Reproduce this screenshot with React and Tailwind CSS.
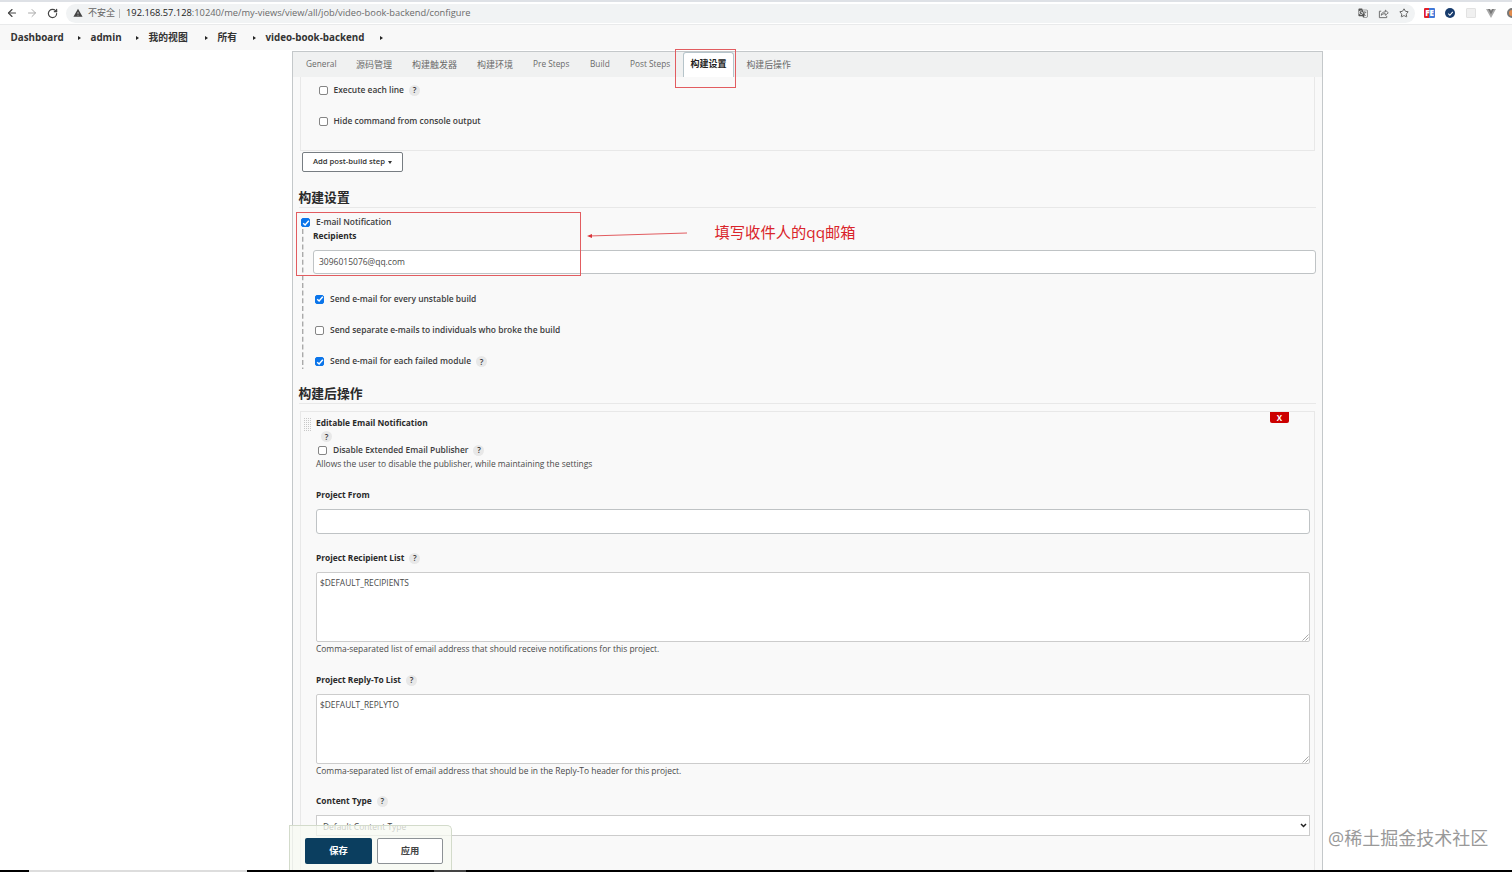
import React from "react";
import { ArrowLeft, ArrowRight, RotateCw, Star } from "lucide-react";
import { MdGTranslate, MdWarning } from "react-icons/md";

const crumbs = [
  { label: "Dashboard", className: "w-[70px]" },
  { label: "admin", className: "w-[48px]" },
  { label: "我的视图", className: "w-[59px]" },
  { label: "所有", className: "w-[38px]" },
  { label: "video-book-backend", className: "w-[117px]" },
];

const tabs = [
  { label: "General", className: "w-[50px] text-[8.3px]" },
  { label: "源码管理", className: "w-[56px] text-[9px]" },
  { label: "构建触发器", className: "w-[65px] text-[9px]" },
  { label: "构建环境", className: "w-[56px] text-[9px]" },
  { label: "Pre Steps", className: "w-[57px] text-[8.3px]" },
  { label: "Build", className: "w-[40px] text-[8.3px]" },
  { label: "Post Steps", className: "w-[53px] text-[8.3px]" },
];

function Checkbox({ checked }) {
  return (
    <span
      className={`flex size-[9px] shrink-0 items-center justify-center rounded-[2px] border ${
        checked ? "border-[#0b75ea] bg-[#0b75ea]" : "border-[#858585] bg-white"
      }`}
    >
      {checked && (
        <svg viewBox="0 0 8 8" className="size-[8px] shrink-0" fill="none" stroke="white" strokeWidth="1.4">
          <path d="M1.2 4.2 3.1 6 6.8 1.8" />
        </svg>
      )}
    </span>
  );
}

function Help({ className = "" }) {
  return (
    <span
      className={`flex size-[11px] shrink-0 items-center justify-center rounded-full bg-[#e8e8e8] text-[8px] font-semibold text-[#333] ${className}`}
    >
      ?
    </span>
  );
}

function CheckRow({ label, checked, help, className = "" }) {
  return (
    <div className={`flex items-center text-[8.43px] font-semibold text-[#3c3c3c] ${className}`}>
      <Checkbox checked={checked} />
      <span className="ml-1.5">{label}</span>
      {help && <Help className="ml-[5px]" />}
    </div>
  );
}

function Label({ children, help, className = "" }) {
  return (
    <div className={`flex items-center text-[8.4px] font-bold text-[#2a2a2a] ${className}`}>
      <span>{children}</span>
      {help && <Help className="ml-[5px]" />}
    </div>
  );
}

function Heading({ children, className = "" }) {
  return (
    <h2
      className={`ml-[5.5px] mr-[6px] flex h-5 items-center border-b border-[#e8e8e8] text-[12.8px] font-bold text-[#2a2a2a] ${className}`}
    >
      {children}
    </h2>
  );
}

function TextArea({ value }) {
  return (
    <div className="relative mr-[4px] h-[70px] rounded-[2px] border border-[#ccc] bg-white px-[3px] pt-[4px] text-[8.4px] leading-[12px] text-[#4a4a4a]">
      {value}
      <svg viewBox="0 0 7 7" className="absolute bottom-0 right-0 size-[7px]" stroke="#888" strokeWidth="0.7">
        <path d="M0.5 6.5 6.5 0.5M3.5 6.5 6.5 3.5" />
      </svg>
    </div>
  );
}

function BrowserBar() {
  return (
    <div className="flex h-[25px] items-center border-b border-t-2 border-b-[#e9eaeb] border-t-[#dee1e6] bg-white text-[#444]">
      <ArrowLeft size={12} strokeWidth={2.3} className="ml-1.5 shrink-0" />
      <ArrowRight size={12} strokeWidth={2} className="ml-2 shrink-0 text-[#aaa]" />
      <RotateCw size={11} strokeWidth={2.6} className="ml-[9px] shrink-0" />
      <div className="ml-2 flex h-[19px] w-[1349px] shrink-0 items-center rounded-full bg-[#f1f3f4] pl-[7px]">
        <MdWarning size={10} className="text-[#444]" />
        <span className="ml-[5px] w-[28px] whitespace-nowrap text-[9px] text-[#666]">不安全</span>
        <span className="ml-[3px] h-[9px] w-px bg-[#bbb]" />
        <span className="ml-[6px] text-[9.3px] text-[#6a6a6a]">
          <span className="text-[#222]">192.168.57.128</span>:10240/me/my-views/view/all/job/video-book-backend/configure
        </span>
        <MdGTranslate size={10} className="ml-auto text-[#555]" />
        <svg viewBox="0 0 12 12" className="ml-[10px] size-[11px]" fill="none" stroke="#666" strokeWidth="1">
          <path d="M3.5 3.5H1.5V10.5H9.5V8.5M3.5 8C3.8 5.4 5.3 4.3 8 4.3V2.3L11.2 5.2 8 8V6.2C6 6.1 4.7 6.6 3.5 8Z" />
        </svg>
        <Star size={10} strokeWidth={2.2} className="ml-[10px] mr-[6px] text-[#555]" />
      </div>
      <div className="ml-[9px] flex shrink-0 items-center">
        <span className="flex h-[10px] w-[11px] items-center justify-center rounded-[1px] bg-gradient-to-r from-[#e2202a] from-50% to-[#3f78d8] to-50% text-[8px] font-extrabold text-white">
          FE
        </span>
        <span className="ml-[10px] flex size-[10px] items-center justify-center rounded-full bg-[#183c6d]">
          <svg viewBox="0 0 8 8" className="size-[7px]" fill="none" stroke="white" strokeWidth="1.2">
            <path d="M1.5 4.2 3.3 6 6.6 2.2" />
          </svg>
        </span>
        <span className="ml-[11px] size-[10px] rounded-[1px] border border-[#e2e2e2] bg-[#f0f0f0]" />
        <svg viewBox="0 0 10 9" className="ml-[10px] h-[9px] w-[10px]">
          <path d="M0 0h4l1 2 1-2h4L5 9z" fill="#aaa" />
          <path d="M2 0h2l1 2 1-2h2L5 5.5z" fill="#777" />
        </svg>
        <span className="ml-[11px] size-[10px] rounded-full border-2 border-[#777] bg-[#e28b4c]" />
      </div>
    </div>
  );
}

function TabBar() {
  return (
    <div className="flex h-[25px] items-center bg-[#f0f1f1] pl-[13px] text-[#6a6a6a]">
      {tabs.map((t) => (
        <span key={t.label} className={`shrink-0 whitespace-nowrap ${t.className}`}>
          {t.label}
        </span>
      ))}
      <span className="flex h-full w-[51px] items-center justify-center whitespace-nowrap rounded-t-[3px] border-x border-t border-[#b6c4ca] bg-white pb-[3px] text-[9px] font-bold text-[#222]">
        构建设置
      </span>
      <span className="ml-[12.5px] whitespace-nowrap text-[8.9px]">构建后操作</span>
    </div>
  );
}

function EmailSettings() {
  return (
    <>
      <CheckRow label="E-mail Notification" checked className="ml-[8px] mt-[8px] h-[13px]" />
      <div className="ml-[9px] flex h-[140px]">
        <svg viewBox="0 0 2 140" className="h-[140px] w-[2px] shrink-0" stroke="#aaa" strokeWidth="1.4" strokeDasharray="5 2.7">
          <path d="M.7 0V140" />
        </svg>
        <div className="flex-1 pl-[9px] pr-[6px]">
          <Label className="h-[14px]">Recipients</Label>
          <div className="mt-[7px] flex h-[24px] items-center rounded-[3px] border border-[#bfc3c5] bg-white px-[5px] text-[8.5px] text-[#4a4a4a]">
            3096015076@qq.com
          </div>
          <CheckRow label="Send e-mail for every unstable build" checked className="ml-[2px] mt-[18px] h-[14px]" />
          <CheckRow
            label="Send separate e-mails to individuals who broke the build"
            className="ml-[2px] mt-[17px] h-[14px]"
          />
          <CheckRow label="Send e-mail for each failed module" checked help className="ml-[2px] mt-[17px] h-[15px]" />
        </div>
      </div>
    </>
  );
}

function Grip() {
  return (
    <svg viewBox="0 0 8 13" className="mt-[6px] h-[13px] w-[8px] shrink-0" stroke="#c8c8c8" strokeWidth="1" strokeDasharray="1 1">
      <path d="M0 .5H8M0 2.5H8M0 4.5H8M0 6.5H8M0 8.5H8M0 10.5H8M0 12.5H8" />
    </svg>
  );
}

function PostBuildActions() {
  return (
    <div className="relative ml-[7px] mr-[7px] mt-[7px] flex h-[480px] border border-[#e8e8e8] pl-[3px]">
      <Grip />
      <div className="ml-[4px] flex-1 text-[8.44px] text-[#4a4a4a]">
        <Label className="mt-[5px] h-[13px]">Editable Email Notification</Label>
        <Help className="ml-[5px] mt-[1px]" />
        <CheckRow label="Disable Extended Email Publisher" help className="ml-[2px] mt-[1px] h-[14px]" />
        <p className="h-[13px] leading-[13px]">Allows the user to disable the publisher, while maintaining the settings</p>
        <Label className="mt-[18px] h-[14px]">Project From</Label>
        <div className="mr-[4px] mt-[7px] h-[25px] rounded-[3px] border border-[#bfc3c5] bg-white" />
        <Label help className="mb-[7px] mt-[17px] h-[14px]">Project Recipient List</Label>
        <TextArea value="$DEFAULT_RECIPIENTS" />
        <p className="h-[14px] leading-[14px]">Comma-separated list of email address that should receive notifications for this project.</p>
        <Label help className="mb-[7px] mt-[17px] h-[14px]">Project Reply-To List</Label>
        <TextArea value="$DEFAULT_REPLYTO" />
        <p className="h-[14px] leading-[14px]">Comma-separated list of email address that should be in the Reply-To header for this project.</p>
        <Label help className="mb-[7px] mt-[16px] h-[14px]">Content Type</Label>
        <div className="mr-[4px] flex h-[21px] items-center justify-between border border-[#ccc] bg-white pl-[6px] pr-[2px]">
          <span className="pt-[3px]">Default Content Type</span>
          <svg viewBox="0 0 7 5" className="h-[5px] w-[7px]" fill="none" stroke="#222" strokeWidth="1.5">
            <path d="M1 1 3.5 3.5 6 1" />
          </svg>
        </div>
      </div>
      <span className="absolute right-[25px] top-0 flex h-[11px] w-[19px] items-center justify-center rounded-b-[2px] bg-[#c00] text-[8px] font-bold text-white">
        X
      </span>
    </div>
  );
}

function SaveBar() {
  return (
    <div className="absolute left-[289px] top-[825px] flex h-[46px] w-[163px] gap-[5px] rounded-tr-[5px] border border-b-0 border-[#d3dbcb] bg-[#f7f9f2]/75 pl-[15px] pt-[12px] text-[9.3px]">
      <button className="flex h-[26px] w-[67px] items-center justify-center rounded-[2px] bg-[#0b3e5f] font-bold text-white">
        保存
      </button>
      <button className="flex h-[26px] w-[66px] items-center justify-center rounded-[2px] border border-[#8d9296] bg-white font-semibold text-[#444]">
        应用
      </button>
    </div>
  );
}

function Annotations() {
  return (
    <>
      <svg className="absolute left-0 top-0 h-[300px] w-[760px]" viewBox="0 0 760 300" fill="none" stroke="#e25c60">
        <rect x="675.5" y="49.5" width="60" height="38" />
        <rect x="296.5" y="212.5" width="284" height="63" />
        <path d="M589 236 687 233" />
        <path d="M587 236 592 234v4z" fill="#d9363b" stroke="none" />
      </svg>
      <p className="absolute left-[714.5px] top-[221px] whitespace-nowrap text-[15.3px] leading-[22px] text-[#d9252b]">
        填写收件人的qq邮箱
      </p>
      <p className="absolute left-[1328px] top-[826px] whitespace-nowrap text-[18px] leading-[24px] text-[#999]">
        @稀土掘金技术社区
      </p>
    </>
  );
}

export default function App() {
  return (
    <div className="relative h-[872px] w-[1512px] overflow-hidden bg-white font-['Open_Sans','Noto_Sans_CJK_SC',sans-serif]">
      <BrowserBar />
      <nav className="flex h-[25px] items-center gap-[10px] bg-[#f8f8f8] pl-[10.5px] pt-[2px] text-[9.8px] font-bold text-[#333]">
        {crumbs.map((c) => (
          <span key={c.label} className={`flex shrink-0 items-center justify-between whitespace-nowrap ${c.className}`}>
            {c.label}
            <span className="mb-[2px] border-y-[2.5px] border-l-[3px] border-y-transparent border-l-[#222]" />
          </span>
        ))}
      </nav>
      <main className="ml-[292px] mt-px h-[820px] w-[1031px] overflow-hidden border-x border-t border-[#c4c8ca] bg-[#f9f9f9]">
        <TabBar />
        <div className="mx-[7px] h-[74px] border border-t-0 border-[#e8e8e8] pl-[17.5px] pt-[6px]">
          <CheckRow label="Execute each line" help className="h-[14px]" />
          <CheckRow label="Hide command from console output" className="mt-[17px] h-[14px]" />
        </div>
        <button className="ml-[9px] mt-px flex h-[20px] w-[101px] items-center justify-center gap-[3px] rounded-[2px] border border-[#777d82] bg-white text-[7.7px] font-semibold text-[#333]">
          Add post-build step
          <span className="border-x-[2.5px] border-t-[3px] border-x-transparent border-t-[#333]" />
        </button>
        <Heading className="mt-[16px]">构建设置</Heading>
        <EmailSettings />
        <Heading className="mt-[15px]">构建后操作</Heading>
        <PostBuildActions />
      </main>
      <SaveBar />
      <Annotations />
      <div className="absolute bottom-0 left-0 flex h-[2px] w-full bg-black">
        <span className="ml-[29px] w-[218px] bg-[#ddd]" />
        <span className="ml-[187px] w-[32px] bg-[#444]" />
      </div>
    </div>
  );
}
